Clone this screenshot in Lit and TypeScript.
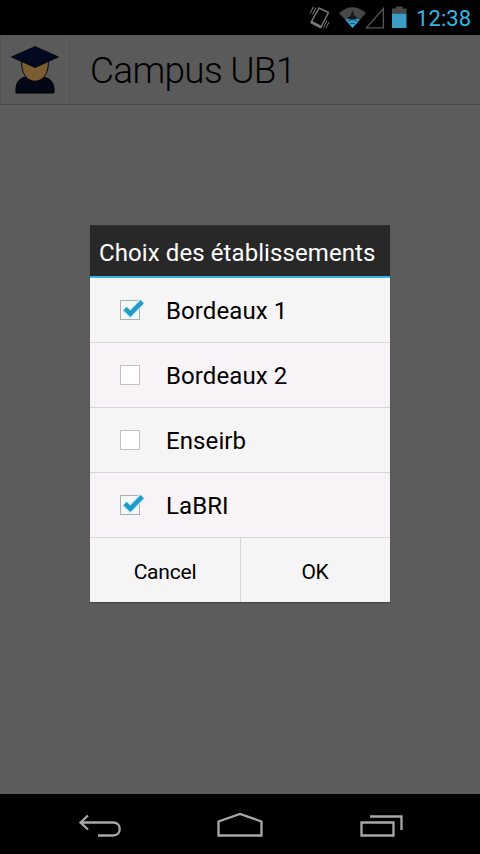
import { LitElement, html, css, svg } from "lit";
import { customElement, property, state } from "lit/decorators.js";
import { classMap } from "lit/directives/class-map.js";

@customElement("status-bar")
class StatusBar extends LitElement {
  static styles = css`
    :host { display: flex; justify-content: flex-end; height: 35px; background: #000; flex: none; }
    svg { display: block; width: 108px; height: 35px; flex: none; }
    .time { width: 65px; box-sizing: border-box; padding-left: 1px; font-size: 22px; line-height: 37px; letter-spacing: .1px; color: #33b5e5; white-space: nowrap; }
  `;
  render() {
    return html`
      <svg viewBox="307 0 108 35">
        <g fill="none" stroke="#777">
          <path d="M319 8 L328.500 12.500 L320.800 27.500 L311 22.300 Z" stroke-width="1.500" stroke-linejoin="round" />
          <path d="M311.200 22 L320.800 27" stroke-width="2.600" />
          <path d="M310 13.500 L313.500 6.500 M312.500 14.500 L316 7.500 M323.500 27.500 L327 20.500 M326 28 L329 22" stroke-width="1" />
        </g>
        <path d="M339 13 Q352.500 1.500 366 13 L352.500 28 Z" fill="#484848" />
        <path d="M345.500 20 Q352.500 15 359.500 20 L352.500 28 Z" fill="#2fa6d4" />
        <path d="M352.500 10.500 L354.800 16 L358 18 L355 19.500 H350 L347 18 L350.200 16 Z" fill="#141a1e" />
        <path d="M347.800 21.300 Q352.500 18 357.200 21.300 M350 24 Q352.500 22.300 355 24" fill="none" stroke="#174052" stroke-width="1" />
        <path d="M366.500 27.900 H383.400 V8.500 Z" fill="none" stroke="#555" stroke-width="1.300" />
        <path d="M392 13.500 V8.500 H396 V6.500 H402.500 V8.500 H406.500 V13.500 Z" fill="#484848" />
        <rect x="392" y="13.500" width="14.500" height="14.500" fill="#3b9bc4" />
      </svg>
      <div class="time">12:38</div>
    `;
  }
}

@customElement("action-bar")
class ActionBar extends LitElement {
  static styles = css`
    :host { display: flex; box-sizing: border-box; height: 70px; border-bottom: 1px solid #484848; background: #5a5a5a; flex: none; }
    .logo { box-sizing: border-box; width: 70px; border: 1px solid #535353; border-bottom: 0; }
    svg { display: block; width: 68px; height: 68px; }
    .title { padding-left: 20px; font-size: 37px; font-weight: 300; line-height: 71px; letter-spacing: -.72px; color: #000; white-space: nowrap; }
  `;
  render() {
    return html`
      <div class="logo">
        <svg viewBox="1 36 68 68">
          <path d="M16 93 V88 Q17 78 26 77 H44 Q53 79 54 88 V93 Z" fill="#020617" stroke="#000" stroke-width="1" stroke-linejoin="round" />
          <path d="M21.500 59 H48.500 Q49 75 41 79.500 Q35 83 29 79.500 Q21 75 21.500 59 Z" fill="#7c5c32" stroke="#0a0a0c" stroke-width="1" />
          <path d="M11.500 57 L35 46.500 L58.500 57 L35 67.500 Z" fill="#020920" stroke="#000" stroke-width=".8" />
        </svg>
      </div>
      <div class="title">Campus UB1</div>
    `;
  }
}

@customElement("choice-row")
class ChoiceRow extends LitElement {
  @property() label = "";
  @property({ type: Boolean }) checked = false;
  static styles = css`
    :host { display: flex; align-items: center; box-sizing: border-box; height: 65px; padding-left: 28px; border-bottom: 1px solid #d6d8d8; background: #f5f5f5; }
    svg { display: block; width: 28px; height: 28px; flex: none; }
    .label { margin-left: 20px; padding-top: 1px; font-size: 24px; line-height: 28px; letter-spacing: .1px; color: #000; white-space: nowrap; }
  `;
  render() {
    return html`
      <svg viewBox="0 0 28 28">
        <rect x="2.500" y="4.500" width="19" height="19" fill=${this.checked ? "#f2f8fa" : "#fff"} stroke=${this.checked ? "#a9b1b4" : "#c2c2c2"} />
        ${this.checked
          ? svg`
            <path d="M6.500 12.500 L12.200 18 L24.200 5.500" fill="none" stroke="#d3eef7" stroke-width="7" />
            <path d="M7 12.700 L12.300 17.800 L24.200 5.700" fill="none" stroke="#1f9cc9" stroke-width="4.600" />`
          : null}
      </svg>
      <span class="label">${this.label}</span>
    `;
  }
}

@customElement("choice-dialog")
class ChoiceDialog extends LitElement {
  @state() private items = [
    { label: "Bordeaux 1", checked: true },
    { label: "Bordeaux 2", checked: false },
    { label: "Enseirb", checked: false },
    { label: "LaBRI", checked: true },
  ];
  static styles = css`
    :host { display: flex; flex-direction: column; width: 300px; background: #f5f5f5; box-shadow: 0 1px 1px #444; }
    choice-row:nth-of-type(even) { background: #f7f3f6; }
    .heading { box-sizing: border-box; height: 53px; padding-left: 9px; border-top: 1px solid #303030; border-bottom: 2px solid #33b5e5; background: #282828; color: #fff; font-size: 24px; line-height: 54px; letter-spacing: .09px; white-space: nowrap; }
    .buttons { display: flex; height: 64px; }
    .button { box-sizing: border-box; width: 150px; text-align: center; font-size: 21px; line-height: 68px; letter-spacing: -.2px; color: #000; }
    .split { border-left: 1px solid #d6d8d8; padding-right: 1px; }
  `;
  render() {
    return html`
      <div class="heading">Choix des établissements</div>
      ${this.items.map((i) => html`<choice-row .label=${i.label} .checked=${i.checked}></choice-row>`)}
      <div class="buttons">
        ${["Cancel", "OK"].map((t, n) => html`<div class=${classMap({ button: true, split: n > 0 })}>${t}</div>`)}
      </div>
    `;
  }
}

@customElement("nav-bar")
class NavBar extends LitElement {
  static styles = css`
    :host { display: flex; justify-content: center; gap: 80px; height: 60px; background: #000; flex: none; }
    svg { display: block; width: 60px; height: 60px; }
    path { fill: none; stroke: #a8a8a8; stroke-width: 2.300; }
  `;
  render() {
    return html`
      <svg viewBox="70 794 60 60"><path d="M88 815.500 L80.500 822.500 L88 829.500 M81 822.500 H113 C122 822.500 122 835.500 113 835.500 H98" /></svg>
      <svg viewBox="210 794 60 60"><path d="M218.500 835.500 V821.500 L240 814 L261.500 821.500 V835.500 Z" /></svg>
      <svg viewBox="350 794 60 60"><path d="M361.500 822.500 H393.500 V835.500 H361.500 Z M370 816.500 H401.500 V830" /></svg>
    `;
  }
}

@customElement("app-root")
class AppRoot extends LitElement {
  static styles = css`
    :host { position: relative; display: flex; flex-direction: column; width: 480px; height: 854px; overflow: hidden; background: #5c5c5c; font-family: Roboto, "Noto Sans", sans-serif; }
    .page { flex: 1; }
    .dialog { position: absolute; left: 90px; top: 225px; }
  `;
  render() {
    return html`
      <status-bar></status-bar>
      <action-bar></action-bar>
      <div class="page"></div>
      <nav-bar></nav-bar>
      <choice-dialog class="dialog"></choice-dialog>
    `;
  }
}
